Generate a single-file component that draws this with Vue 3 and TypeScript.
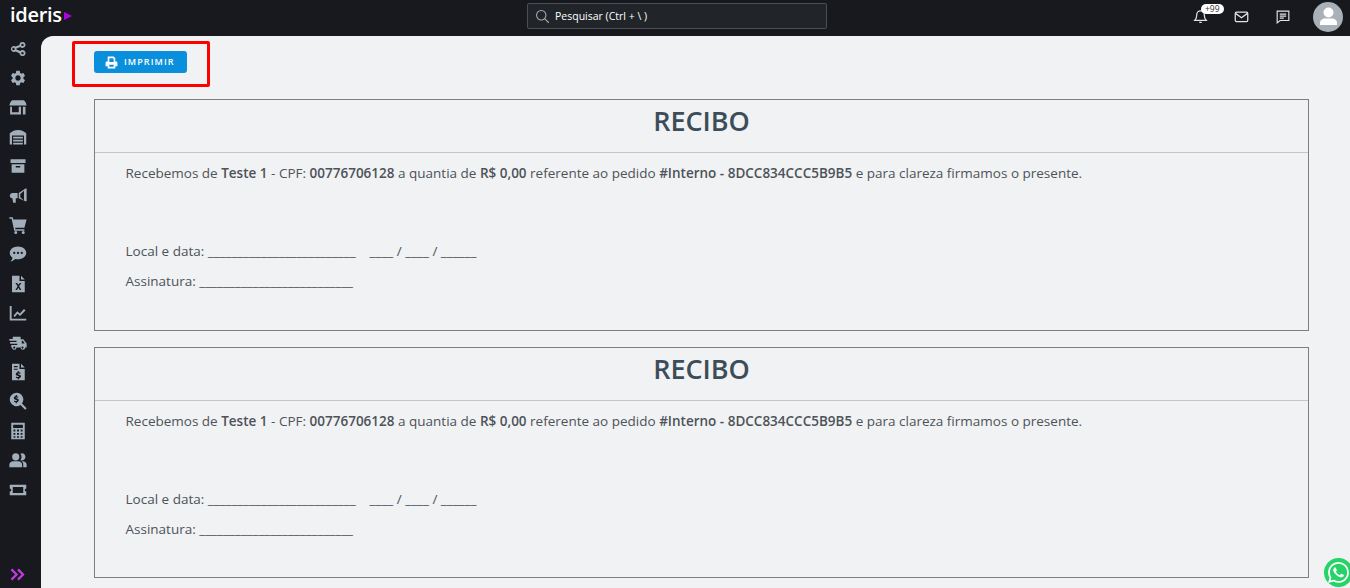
<script setup lang="ts">
const gear = 'M19.14 12.94c.04-.3.06-.61.06-.94 0-.32-.02-.64-.07-.94l2.03-1.58a.49.49 0 0 0 .12-.61l-1.92-3.32a.488.488 0 0 0-.59-.22l-2.39.96c-.5-.38-1.03-.7-1.62-.94l-.36-2.54a.484.484 0 0 0-.48-.41h-3.84c-.24 0-.43.17-.47.41l-.36 2.54c-.59.24-1.13.57-1.62.94l-2.39-.96c-.22-.08-.47 0-.59.22L2.74 8.87c-.12.21-.08.47.12.61l2.03 1.58c-.05.3-.09.63-.09.94s.02.64.07.94l-2.03 1.58a.49.49 0 0 0-.12.61l1.92 3.32c.12.22.37.29.59.22l2.39-.96c.5.38 1.03.7 1.62.94l.36 2.54c.05.24.24.41.48.41h3.84c.24 0 .44-.17.47-.41l.36-2.54c.59-.24 1.13-.56 1.62-.94l2.39.96c.22.08.47 0 .59-.22l1.92-3.32c.12-.22.07-.47-.12-.61l-2.01-1.58zM12 15.6c-1.98 0-3.6-1.62-3.6-3.6s1.62-3.6 3.6-3.6 3.6 1.62 3.6 3.6-1.62 3.6-3.6 3.6z'

// side menu icons, one compound path each on a 24 grid
const menuIcons: string[] = [
  'M18 2.500a4 4 0 1 1-2.900 6.800L9.900 11.300a4 4 0 0 1 0 1.400l5.200 2A4 4 0 1 1 14 17.500l-5.200-2.100a4 4 0 1 1 0-6.800L14 6.500a4 4 0 0 1 4-4zm0 2.400a1.600 1.600 0 1 0 0 3.200 1.600 1.600 0 0 0 0-3.200zM6 10.400a1.600 1.600 0 1 0 0 3.200 1.600 1.600 0 0 0 0-3.200zm12 5.500a1.600 1.600 0 1 0 0 3.200 1.600 1.600 0 0 0 0-3.200z',
  gear,
  'M4.500 3h15c2 1 3.500 3.500 4 7H.500c.500-3.500 2-6 4-7zM1.500 11.500h2.500V19h9v-7.500h3v10.500H1.500zM18.500 11.500H22V22h-3.500z',
  'M12 2.500c4 0 8 1.500 11 4.500v15h-3V10H4v12H1V7c3-3 7-4.500 11-4.500zM5.500 11.500h13v2.500h-13zM5.500 15.500h13V18h-13zM5.500 19.500h13V22h-13z',
  'M2 3h20v5H2zM3.500 9.500h17V21h-17zM9 12v2h6v-2z',
  'M22 2h1.500v17H22l-9-4V8zM20 5l-5 4.200v4.600l5 4.200zM11.500 8v7H9v6H5.500l-1-6H4a4 4 0 0 1-3-3.500A4 4 0 0 1 4 8z',
  'M.500 1.500h4.500l.7 3H23.500l-3 11H8.200l.4 2H20.500v2H7L3.500 3.500h-3zM9 20a2 2 0 1 1 0 4 2 2 0 0 1 0-4zm10 0a2 2 0 1 1 0 4 2 2 0 0 1 0-4z',
  'M12 2c6.100 0 11 3.800 11 8.500S18.100 19 12 19c-1.300 0-2.500-.2-3.600-.5C6.800 20 4.500 21.500 2 22c1.300-1.300 2.300-3 2.700-5A8 8 0 0 1 1 10.500C1 5.800 5.900 2 12 2zM7 9a1.500 1.500 0 1 0 0 3 1.500 1.500 0 0 0 0-3zm5 0a1.500 1.500 0 1 0 0 3 1.500 1.500 0 0 0 0-3zm5 0a1.500 1.500 0 1 0 0 3 1.500 1.500 0 0 0 0-3z',
  'M4 1h10v7h7v15H4zM16 1l5 5h-5zM8.500 10.500L11.500 15 8.500 20h2.200l1.800-3 1.800 3h2.200l-3-5 3-4.500h-2.200L12.500 13l-1.800-2.500z',
  'M1 2.500h2.500v17H23V22H1zM6 15.500l5-6 3.500 3L20 6.500l2 2-7.300 7.500-3.400-3-3.500 4.200z',
  'M5 3.500h10.500V7H19l4.500 5.500V18h-2a3 3 0 0 1-6 0H10a3 3 0 0 1-6 0H3v-3.500h8V13H1.500v-2.500H10V9H.500V6.500H5zM17 9v3.500h4L18.500 9zM7 16.500a1.500 1.500 0 1 0 0 3 1.500 1.500 0 0 0 0-3zm11 0a1.500 1.500 0 1 0 0 3 1.500 1.500 0 0 0 0-3z',
  'M4 1h10v7h7v15H4zM16 1l5 5h-5zM6.500 4v1.500h5V4zM6.500 7.500V9h5V7.500zM11.500 11v1.200c-1.500.3-2.500 1.200-2.500 2.500 0 2.800 4 2 4 3.300 0 .5-.6.7-1.200.7-.7 0-1.500-.3-2-.8L9 19.200c.6.600 1.500 1 2.500 1.100V21.500h2v-1.200c1.500-.3 2.500-1.200 2.500-2.600 0-2.800-4-2-4-3.200 0-.4.500-.6 1-.6.600 0 1.200.2 1.700.6l.9-1.300c-.6-.5-1.300-.8-2.100-.9V11z',
  'M10 1a9 9 0 0 1 7.300 14.300L23.500 21.500 21.500 23.500 15.300 17.300A9 9 0 1 1 10 1zM9 4v1.400C7.500 5.700 6.500 6.700 6.500 8c0 2.700 4 2 4 3.300 0 .5-.6.7-1.200.7-.7 0-1.400-.3-2-.8l-.9 1.300c.6.6 1.500 1 2.500 1.100V15h1.600v-1.400c1.500-.3 2.500-1.300 2.500-2.600 0-2.700-4-2-4-3.200 0-.4.500-.6 1-.6.600 0 1.200.2 1.700.6l.9-1.300c-.6-.5-1.300-.8-2-.9V4z',
  'M3 1h18v22H3zM5.500 3.500V8h13V3.500zM6 10v2.500h2.500V10zm4.700 0v2.500h2.600V10zm4.800 0v2.500H18V10zM6 14.500V17h2.500v-2.500zm4.700 0V17h2.600v-2.500zm4.800 0V17H18v-2.500zM6 19v2h2.500v-2zm4.700 0v2h2.600v-2zm4.800 0v2H18v-2z',
  'M9 3a4.800 4.800 0 1 1 0 9.600A4.800 4.800 0 0 1 9 3zm8 0a4.800 4.800 0 1 1-1.800 9.200 7 7 0 0 0 0-8.400A4.800 4.800 0 0 1 17 3zM.500 21.500V18c0-2.800 2.500-4.500 5-4.500h7c2.500 0 5 1.700 5 4.500v3.500zm18.500 0V18c0-1.700-.7-3.200-2-4.400 3.500-.4 6.500 1.400 6.500 4.400v3.500z',
  'M1 5h22v5a2 2 0 0 0 0 4v5H1v-5a2 2 0 0 0 0-4zM5 8v8h14V8z',
]
</script>

<template>
  <div class="app">
    <header class="topbar">
      <div class="logo">
        <span class="logo-text">ideris</span>
        <svg class="logo-mark" viewBox="0 0 8 8" width="8" height="8"><path d="M0 0l8 4-8 4z" /></svg>
      </div>

      <div class="search">
        <svg viewBox="0 0 24 24" width="15" height="15" fill="none" stroke="#a8adb4" stroke-width="1.700">
          <circle cx="10" cy="10" r="7.500" />
          <path d="M15.500 15.500L22 22" />
        </svg>
        <span>Pesquisar (Ctrl + \ )</span>
      </div>

      <div class="top-actions">
        <div class="bell">
          <svg viewBox="0 0 24 24" width="15" height="15" fill="none" stroke="#dfe3e8" stroke-width="2">
            <path d="M12 3a6 6 0 0 1 6 6c0 5 1 7 3 9H3c2-2 3-4 3-9a6 6 0 0 1 6-6zM10 21.500h4" />
          </svg>
          <span class="badge">+99</span>
        </div>
        <svg class="mail" viewBox="0 0 24 24" width="15" height="15" fill="none" stroke="#dfe3e8" stroke-width="2">
          <rect x="2" y="5" width="20" height="15" rx="2" />
          <path d="M2.500 7l9.500 7 9.500-7" />
        </svg>
        <svg class="chat" viewBox="0 0 24 24" width="14" height="14" fill="none" stroke="#dfe3e8" stroke-width="2">
          <path d="M2 2h20v16H7l-5 4zM6.500 7h11M6.500 10.500h11M6.500 14h7" />
        </svg>
        <div class="avatar">
          <svg viewBox="0 0 30 30" width="30" height="30" fill="#fff">
            <circle cx="15.500" cy="10.500" r="5" />
            <path d="M7 23v-2c0-3 2.500-4.500 5-4.500h7c2.500 0 5 1.500 5 4.500v2z" />
          </svg>
        </div>
      </div>
    </header>

    <div class="body">
      <nav class="sidebar">
        <div class="menu">
          <div v-for="(d, i) in menuIcons" :key="i" class="menu-item">
            <svg viewBox="0 0 24 24" width="18" height="18" fill-rule="evenodd"><path :d="d" /></svg>
          </div>
        </div>
        <svg class="expand" viewBox="0 0 16 14" width="15" height="13" fill="none" stroke="#c03be0" stroke-width="2.400">
          <path d="M1.500 1.500L7 7l-5.500 5.500M8.500 1.500L14 7l-5.500 5.500" />
        </svg>
      </nav>

      <main class="content">
        <div class="toolbar">
          <button class="print-btn" type="button">
            <svg viewBox="0 0 24 24" width="13" height="13" fill="#fff" fill-rule="evenodd">
              <path d="M5 1h11l3 3v6h1.500A2.500 2.500 0 0 1 23 12.500V19h-4v4H5v-4H1v-6.500A2.500 2.500 0 0 1 3.500 10H5zM8 4v7h8V5.500L14.500 4zM8 16v4h8v-4z" />
            </svg>
            <span class="print-label">IMPRIMIR</span>
          </button>
          <div class="highlight"></div>
        </div>

        <section v-for="n in 2" :key="n" class="receipt">
          <h1 class="receipt-title">RECIBO</h1>
          <div class="receipt-body">
            <p class="statement">
              Recebemos de <b>Teste 1</b> - CPF: <b>00776706128</b> a quantia de <b>R$ 0,00</b> referente ao pedido <b>#Interno - 8DCC834CCC5B9B5</b> e para clareza firmamos o presente.
            </p>
            <p class="line">Local e data: _________________________ &nbsp;&nbsp; ____ / ____ / ______</p>
            <p class="line">Assinatura: __________________________</p>
          </div>
        </section>
      </main>
    </div>

    <div class="whatsapp">
      <svg viewBox="0 0 24 24" width="21" height="21" fill="#fff">
        <path d="M17.472 14.382c-.297-.149-1.758-.867-2.03-.967-.273-.099-.471-.148-.67.15-.197.297-.767.966-.94 1.164-.173.199-.347.223-.644.075-.297-.15-1.255-.463-2.39-1.475-.883-.788-1.48-1.761-1.653-2.059-.173-.297-.018-.458.13-.606.134-.133.298-.347.446-.52.149-.174.198-.298.298-.497.099-.198.05-.371-.025-.52-.075-.149-.669-1.612-.916-2.207-.242-.579-.487-.5-.669-.51-.173-.008-.371-.01-.57-.01-.198 0-.52.074-.792.372-.272.297-1.04 1.016-1.04 2.479 0 1.462 1.065 2.875 1.213 3.074.149.198 2.096 3.2 5.077 4.487.709.306 1.262.489 1.694.625.712.227 1.36.195 1.871.118.571-.085 1.758-.719 2.006-1.413.248-.694.248-1.289.173-1.413-.074-.124-.272-.198-.57-.347m-5.421 7.403h-.004a9.87 9.87 0 01-5.031-1.378l-.361-.214-3.741.982.998-3.648-.235-.374a9.86 9.86 0 01-1.51-5.26c.001-5.45 4.436-9.884 9.888-9.884 2.64 0 5.122 1.03 6.988 2.898a9.825 9.825 0 012.893 6.994c-.003 5.45-4.437 9.884-9.885 9.884m8.413-18.297A11.815 11.815 0 0012.05 0C5.495 0 .16 5.335.157 11.892c0 2.096.547 4.142 1.588 5.945L.057 24l6.305-1.654a11.882 11.882 0 005.683 1.448h.005c6.554 0 11.89-5.335 11.893-11.893a11.821 11.821 0 00-3.48-8.413z" />
      </svg>
    </div>
  </div>
</template>

<style scoped>
.app {
  position: relative;
  display: flex;
  flex-direction: column;
  height: 588px;
  overflow: hidden;
  background: #17191e;
  font-family: "Open Sans", "Liberation Sans", sans-serif;
}

.topbar {
  display: grid;
  grid-template-columns: 1fr 300px 1fr;
  align-items: center;
  height: 36px;
  flex-shrink: 0;
  padding: 0 6px 3px 10px;
  box-sizing: border-box;
}

.logo {
  display: flex;
  align-items: center;
  gap: 2px;
  height: 30px;
  margin-top: -4px;
}

.logo-text {
  font-size: 20px;
  font-weight: 600;
  letter-spacing: -0.3px;
  color: #fff;
}

.logo-mark {
  fill: #b400e0;
  margin-top: 3px;
}

.search {
  display: flex;
  align-items: center;
  gap: 5px;
  height: 26px;
  margin-top: -1px;
  padding-left: 7px;
  box-sizing: border-box;
  background: #212429;
  border: 1px solid #4b4e53;
  border-radius: 2px;
  font-size: 10.5px;
  color: #fff;
}

.top-actions {
  display: flex;
  align-items: center;
  justify-content: flex-end;
  padding-right: 1px;
}

.bell {
  position: relative;
  display: flex;
  margin-right: 26px;
}

.badge {
  position: absolute;
  top: -5px;
  left: 8px;
  padding: 0 4px;
  background: #fff;
  border-radius: 7px;
  font-size: 8.500px;
  line-height: 10px;
  color: #333;
}

.mail {
  margin-right: 27px;
}

.chat {
  margin-right: 23px;
}

.avatar {
  width: 30px;
  height: 30px;
  border-radius: 50%;
  background: #aab0b8;
}

.body {
  display: flex;
  flex: 1;
  min-height: 0;
}

.sidebar {
  display: flex;
  flex-direction: column;
  align-items: center;
  justify-content: space-between;
  width: 41px;
  flex-shrink: 0;
}

.menu {
  display: flex;
  flex-direction: column;
  margin-top: -2px;
  margin-left: -5px;
}

.menu-item {
  display: flex;
  align-items: center;
  justify-content: center;
  height: 29.4px;
  fill: #a3aebb;
}

.expand {
  margin-bottom: 7px;
  margin-left: -7px;
}

.content {
  flex: 1;
  min-width: 0;
  padding: 15px 41px 0 53px;
  background: #f1f2f4;
  border-top-left-radius: 12px;
  color: #4d5358;
}

.toolbar {
  position: relative;
  height: 48px;
}

.print-btn {
  display: flex;
  align-items: center;
  gap: 6px;
  width: 93px;
  height: 22px;
  padding: 0 0 0 11px;
  background: #0a8fdc;
  border: 0;
  border-radius: 3px;
  font-family: inherit;
  color: #fff;
}

.print-label {
  margin-top: -2px;
  font-size: 9px;
  font-weight: 600;
  letter-spacing: 1.1px;
}

.highlight {
  position: absolute;
  top: -10px;
  left: -22px;
  width: 138px;
  height: 46px;
  box-sizing: border-box;
  border: 3px solid #f00;
  border-radius: 2px;
}

.receipt {
  height: 231.5px;
  margin-bottom: 16px;
  box-sizing: border-box;
  border: 1px solid #7b7e83;
}

.receipt-title {
  height: 53px;
  margin: 0;
  box-sizing: border-box;
  border-bottom: 1px solid #c4c6c9;
  font-size: 27px;
  font-weight: 600;
  line-height: 41px;
  text-align: center;
  color: #3c4d59;
}

.receipt-body {
  padding: 10px 30.5px 0;
  font-size: 13.5px;
  line-height: 20px;
}

.receipt-body b {
  font-weight: 600;
}

.statement {
  margin: 0 0 58px;
}

.line {
  margin: 0 0 10px;
}

.whatsapp {
  position: absolute;
  top: 558px;
  left: 1324px;
  display: flex;
  align-items: center;
  justify-content: center;
  width: 29px;
  height: 29px;
  border-radius: 50%;
  background: #25d366;
}
</style>

<style>
html, body {
  margin: 0;
  overflow: hidden;
}
</style>
